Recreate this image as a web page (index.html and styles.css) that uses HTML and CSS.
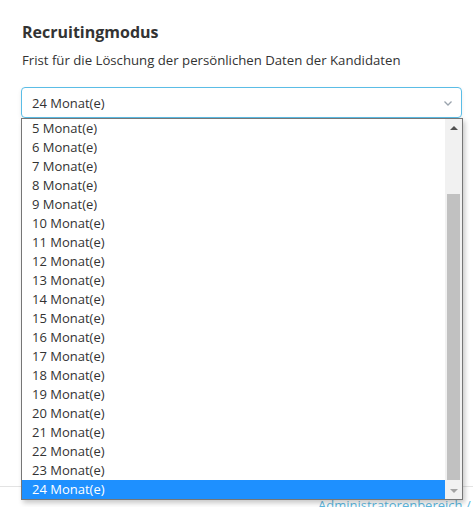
FILE: index.html
```html
<!DOCTYPE html>
<html lang="de">
<head>
<meta charset="utf-8">
<title>Recruitingmodus</title>
<link rel="stylesheet" href="styles.css">
</head>
<body>
<div class="page">
  <h2 class="title">Recruitingmodus</h2>
  <p class="label">Frist für die Löschung der persönlichen Daten der Kandidaten</p>
  <div class="select-wrap">
    <div class="select">
      <span>24 Monat(e)</span>
      <svg class="chev" width="8" height="5" viewBox="0 0 8 5"><path d="M0.5 0.5 L4 4 L7.5 0.5" fill="none" stroke="#9aa3ad" stroke-width="1.3"/></svg>
    </div>
    <div class="dropdown">
      <ul class="options">
        <li>5 Monat(e)</li>
        <li>6 Monat(e)</li>
        <li>7 Monat(e)</li>
        <li>8 Monat(e)</li>
        <li>9 Monat(e)</li>
        <li>10 Monat(e)</li>
        <li>11 Monat(e)</li>
        <li>12 Monat(e)</li>
        <li>13 Monat(e)</li>
        <li>14 Monat(e)</li>
        <li>15 Monat(e)</li>
        <li>16 Monat(e)</li>
        <li>17 Monat(e)</li>
        <li>18 Monat(e)</li>
        <li>19 Monat(e)</li>
        <li>20 Monat(e)</li>
        <li>21 Monat(e)</li>
        <li>22 Monat(e)</li>
        <li>23 Monat(e)</li>
        <li class="selected">24 Monat(e)</li>
      </ul>
      <div class="scrollbar">
        <div class="arrow up"></div>
        <div class="track"><div class="thumb"></div></div>
        <div class="arrow down"></div>
      </div>
    </div>
  </div>
</div>
<footer class="footer">
  <a class="link" href="#">Administratorenbereich / Impressum</a>
</footer>
</body>
</html>
```
FILE: styles.css
```css
html, body {
  margin: 0;
  padding: 0;
  background: #fff;
}
body {
  font-family: "Open Sans", "Noto Sans", sans-serif;
  color: #333;
  overflow: hidden;
  height: 507px;
}
.page {
  padding: 21px 11px 0 21px;
}
.title {
  margin: 0 0 0 1px;
  font-size: 16px;
  line-height: 22px;
  font-weight: 700;
  color: #333;
}
.label {
  margin: 8px 0 0 1px;
  font-size: 13.2px;
  line-height: 18px;
}
.select-wrap {
  position: relative;
  margin-top: 18px;
}
.select {
  box-sizing: border-box;
  width: 441px;
  height: 31px;
  border: 1px solid #5bbde6;
  border-radius: 4px;
  padding: 0 9px 0 10px;
  display: flex;
  align-items: center;
  justify-content: space-between;
  font-size: 13px;
  box-shadow: 0 2px 4px rgba(0,0,0,0.08);
}
.select span {
  padding-top: 1px;
}
.chev {
  margin-top: 1px;
}
.dropdown {
  position: absolute;
  left: 0;
  top: 31px;
  width: 442px;
  height: 382px;
  box-sizing: border-box;
  border: 1px solid #767676;
  background: #fff;
  display: flex;
  box-shadow: 2px 3px 5px rgba(0,0,0,0.22);
  z-index: 2;
}
.options {
  list-style: none;
  margin: 0;
  padding: 0;
  flex: 1;
}
.options li {
  height: 19px;
  line-height: 19px;
  padding-left: 10px;
  font-size: 13px;
  color: #333;
}
.options li.selected {
  background: #1e90ff;
  color: #fff;
}
.scrollbar {
  width: 17px;
  background: #f1f1f1;
  display: flex;
  flex-direction: column;
}
.arrow {
  height: 17px;
  display: flex;
  align-items: center;
  justify-content: center;
}
.arrow::before {
  content: "";
  width: 0;
  height: 0;
  border-left: 4px solid transparent;
  border-right: 4px solid transparent;
}
.arrow.up::before {
  border-bottom: 4px solid #505050;
}
.arrow.down::before {
  border-top: 4px solid #a3a3a3;
}
.track {
  flex: 1;
  position: relative;
}
.thumb {
  position: absolute;
  left: 2px;
  right: 2px;
  top: 58px;
  bottom: 2px;
  background: #c1c1c1;
}
.footer {
  margin-top: 368px;
  border-top: 1px solid #e3e3e3;
  padding-left: 318px;
  white-space: nowrap;
  overflow: hidden;
  font-size: 13px;
  line-height: 18px;
  padding-top: 9px;
}
.link {
  color: #5bb7e0;
  text-decoration: none;
}
```
